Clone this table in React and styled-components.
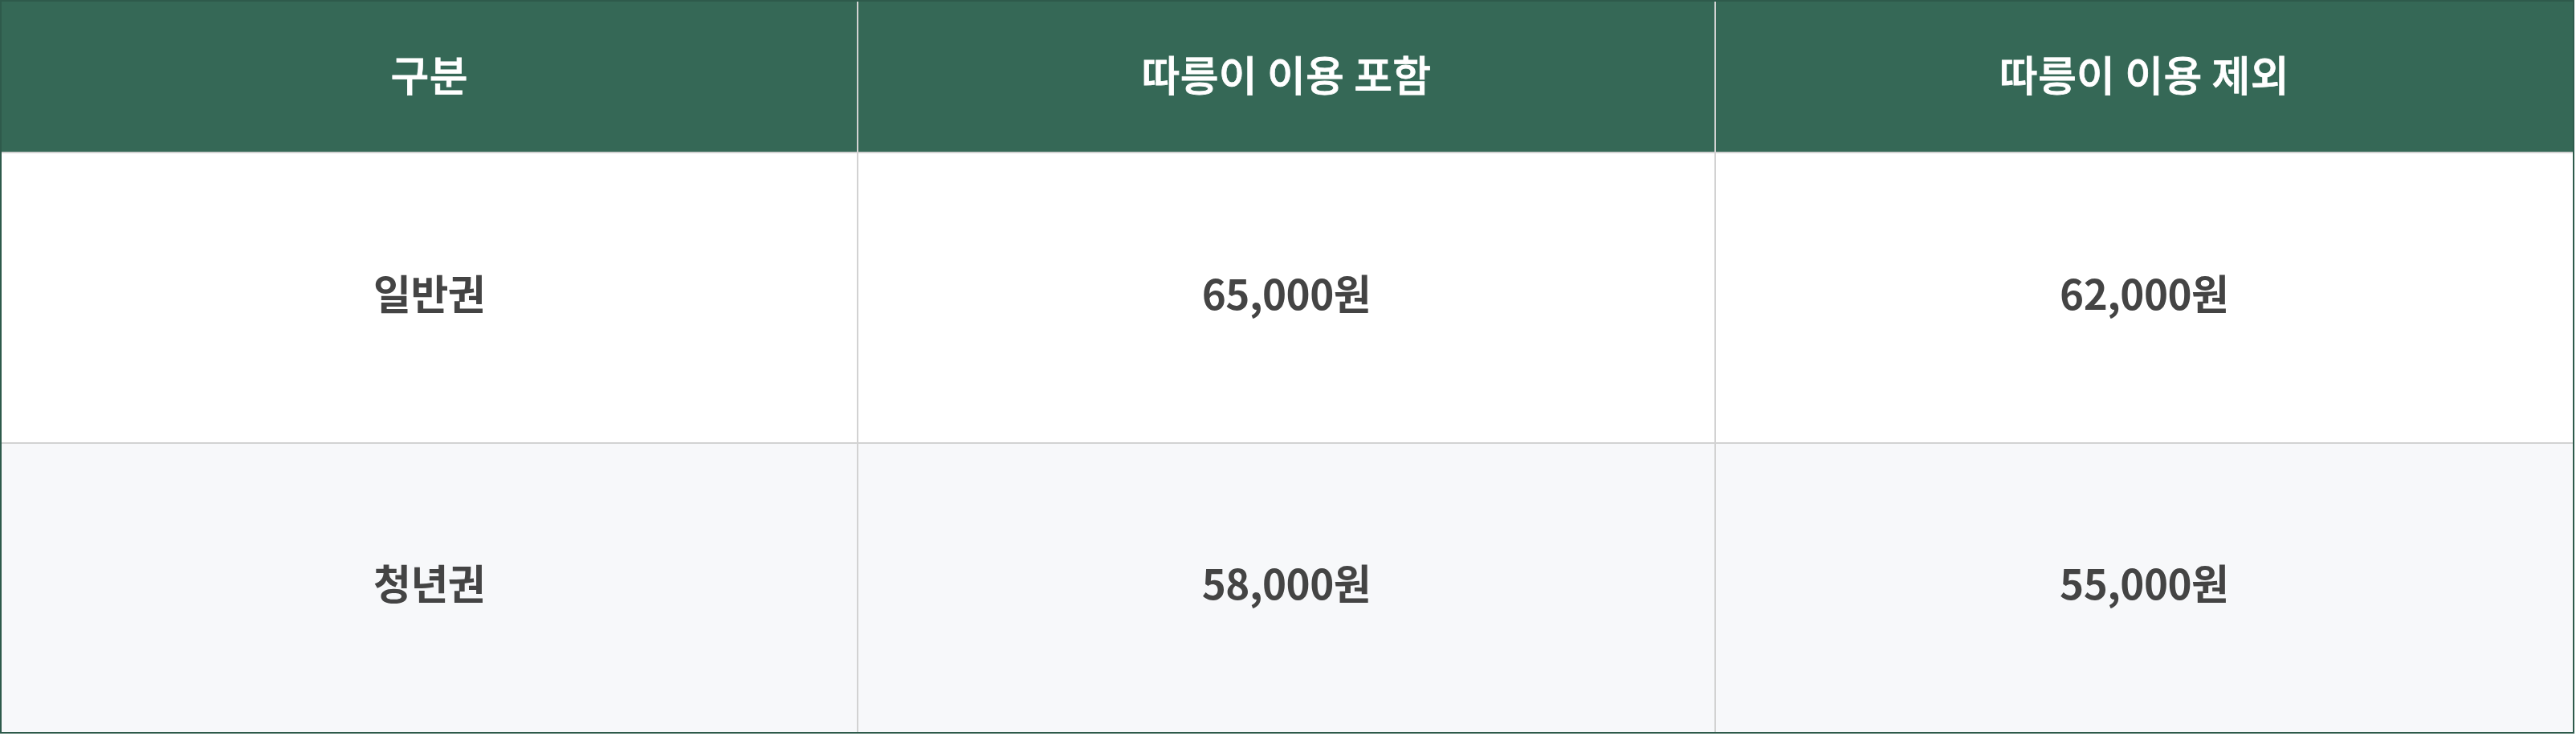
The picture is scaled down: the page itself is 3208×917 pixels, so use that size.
import React from 'react';
import styled, { createGlobalStyle } from 'styled-components';

const GlobalStyle = createGlobalStyle`
  html, body {
    margin: 0;
    padding: 0;
    background: #ffffff;
  }
  body {
    font-family: "Noto Sans CJK KR", "Noto Sans", sans-serif;
  }
`;

const Table = styled.div`
  width: 3206px;
  box-sizing: border-box;
  border: 2px solid #2e5a4b;
  display: grid;
  grid-template-columns: repeat(3, 1fr);
  grid-template-rows: 189px 362px 359px;
`;

const Cell = styled.div`
  display: flex;
  align-items: center;
  justify-content: center;
  box-sizing: border-box;
  padding-bottom: ${p => (p.$head ? '8px' : '14px')};
  background: ${p => (p.$head ? '#356856' : p.$stripe ? '#f7f8fa' : '#ffffff')};
  color: ${p => (p.$head ? '#ffffff' : '#444444')};
  font-size: ${p => (p.$head ? '52px' : '51px')};
  font-weight: ${p => (p.$head ? 500 : 700)};
  -webkit-text-stroke: ${p => (p.$head ? '0.8px #ffffff' : '0')};
  letter-spacing: ${p => (p.$head ? '0.3px' : '-0.5px')};
  line-height: 1;
  border-right: ${p => (p.$last ? 'none' : '2px solid #d2d2d2')};
  border-bottom: ${p => (p.$bottom ? 'none' : '2px solid #d2d2d2')};
`;

const columns = ['구분', '따릉이 이용 포함', '따릉이 이용 제외'];

const rows = [
  ['일반권', '65,000원', '62,000원'],
  ['청년권', '58,000원', '55,000원'],
];

export default function App() {
  return (
    <>
      <GlobalStyle />
      <Table>
        {columns.map((c, i) => (
          <Cell key={c} $head $last={i === 2}>{c}</Cell>
        ))}
        {rows.map((r, ri) =>
          r.map((v, ci) => (
            <Cell
              key={ri + '-' + ci}
              $stripe={ri % 2 === 1}
              $last={ci === 2}
              $bottom={ri === rows.length - 1}
            >
              {v}
            </Cell>
          ))
        )}
      </Table>
    </>
  );
}
